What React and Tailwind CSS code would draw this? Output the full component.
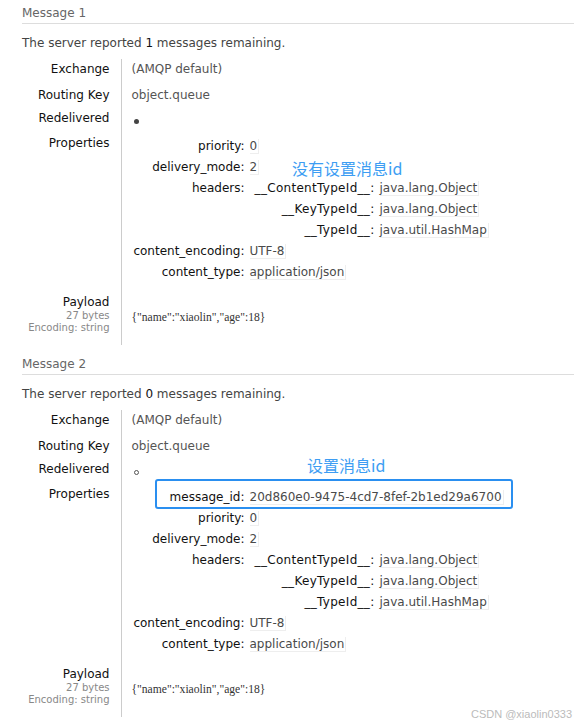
const font = { fontFamily: '"DejaVu Sans", Verdana, sans-serif' };

const Sub = ({ k, children }) => (
  <tr>
    <td className="w-[113px] text-right whitespace-nowrap py-[2.5px] leading-[16px] align-top text-[#111]">{k}:</td>
    <td className="pl-[5px] py-[2.5px] leading-[16px] align-top whitespace-nowrap">{children}</td>
  </tr>
);

const Val = ({ children }) => (
  <span className="text-[#4a4a4a] border-b border-r border-[#eeeeee] pr-[1px]">{children}</span>
);

const Headers = () => (
  <table className="border-collapse">
    <tbody>
      {[
        ["__ContentTypeId__", "java.lang.Object"],
        ["__KeyTypeId__", "java.lang.Object"],
        ["__TypeId__", "java.util.HashMap"],
      ].map(([k, v]) => (
        <tr key={k}>
          <td className="w-[125px] text-right whitespace-nowrap py-[2.5px] leading-[16px] tracking-[0.3px] text-[#111]">{k}:</td>
          <td className="pl-[5px] py-[2.5px] leading-[16px] whitespace-nowrap"><Val>{v}</Val></td>
        </tr>
      ))}
    </tbody>
  </table>
);

const Message = ({ n, remaining, redelivered, messageId }) => (
  <section className={"relative pl-[22px] " + (n === 2 ? "mt-[6px]" : "")}>
    <h3 className="pt-[6px] pb-[3px] text-[12px] leading-[14px] text-[#666] border-b border-[#dddddd]">
      Message {n}
    </h3>
    <p className="mt-[12px] leading-[14px] text-[#444]">
      The server reported <span className="text-[#111]">{remaining}</span> messages remaining.
    </p>
    <table className="mt-[9px] border-collapse">
      <tbody>
        <tr>
          <td className="w-[99px] pr-[11px] text-right pt-[2px] pb-[8px] leading-[16px] text-[#111]">Exchange</td>
          <td className="pl-[10px] pt-[2px] pb-[8px] leading-[16px] border-l border-[#cccccc] text-[#555]">(AMQP default)</td>
        </tr>
        <tr>
          <td className="pr-[11px] text-right pt-[2px] pb-[5px] leading-[16px] text-[#111]">Routing Key</td>
          <td className="pl-[10px] pt-[2px] pb-[5px] leading-[16px] border-l border-[#cccccc] text-[#555]">object.queue</td>
        </tr>
        <tr>
          <td className="pr-[11px] text-right pt-[2px] pb-[7px] leading-[16px] text-[#111]">Redelivered</td>
          <td className="pl-[12px] pt-[2px] pb-[7px] leading-[16px] border-l border-[#cccccc]">
            {redelivered ? (
              <span className="inline-block w-[5px] h-[5px] rounded-full bg-[#444] mt-[9px] align-top" />
            ) : (
              <span className="inline-block w-[5px] h-[5px] rounded-full border border-[#555] mt-[9px] align-top" />
            )}
          </td>
        </tr>
        <tr>
          <td className="pr-[11px] text-right pt-[2px] leading-[16px] align-top text-[#111]">Properties</td>
          <td className="pl-[10px] pt-[2px] pb-[8px] border-l border-[#cccccc] align-top">
            <table className="border-collapse">
              <tbody>
                {messageId && (
                  <Sub k="message_id"><Val>{messageId}</Val></Sub>
                )}
                <Sub k="priority"><Val>0</Val></Sub>
                <Sub k="delivery_mode"><Val>2</Val></Sub>
                <tr>
                  <td className="w-[113px] text-right whitespace-nowrap py-[2.5px] leading-[16px] align-top text-[#111]">headers:</td>
                  <td className="pl-[5px] align-top"><Headers /></td>
                </tr>
                <Sub k="content_encoding"><Val>UTF-8</Val></Sub>
                <Sub k="content_type"><Val>application/json</Val></Sub>
              </tbody>
            </table>
          </td>
        </tr>
        <tr>
          <td className="pr-[11px] text-right pt-[4px] pb-[11px] align-top">
            <div className="leading-[16px] text-[#111]">Payload</div>
            <div className="text-[10px] leading-[12px] text-[#888]">27 bytes</div>
            <div className="text-[10px] leading-[12px] text-[#888]">Encoding: string</div>
          </td>
          <td className="pl-[10px] pt-[18px] border-l border-[#cccccc] align-top">
            <span
              className="text-[11.6px] leading-[16px] text-[#333] whitespace-nowrap"
              style={{ fontFamily: '"Liberation Serif", serif' }}
            >
              {'{"name":"xiaolin","age":18}'}
            </span>
          </td>
        </tr>
      </tbody>
    </table>
    {n === 1 ? (
      <div
        className="absolute left-[292px] top-[157px] text-[16px] leading-[22px] text-[#3d9df3]"
        style={{ fontFamily: '"Noto Sans CJK SC", sans-serif' }}
      >
        没有设置消息id
      </div>
    ) : (
      <>
        <div
          className="absolute left-[307px] top-[103px] text-[16px] leading-[22px] text-[#3d9df3]"
          style={{ fontFamily: '"Noto Sans CJK SC", sans-serif' }}
        >
          设置消息id
        </div>
        <div className="absolute left-[155px] top-[128px] w-[358px] h-[30px] border-2 border-[#2a8ff0] rounded-[3px]" />
      </>
    )}
  </section>
);

export default function App() {
  return (
    <div className="relative h-[726px] overflow-hidden bg-white text-[12px]" style={font}>
      <Message n={1} remaining={1} redelivered />
      <Message n={2} remaining={0} messageId="20d860e0-9475-4cd7-8fef-2b1ed29a6700" />
      <div className="absolute right-[2px] bottom-[4px] text-[11px] text-[#bbbbbb]" style={{ fontFamily: '"Liberation Sans", Arial, sans-serif' }}>
        CSDN @xiaolin0333
      </div>
    </div>
  );
}
